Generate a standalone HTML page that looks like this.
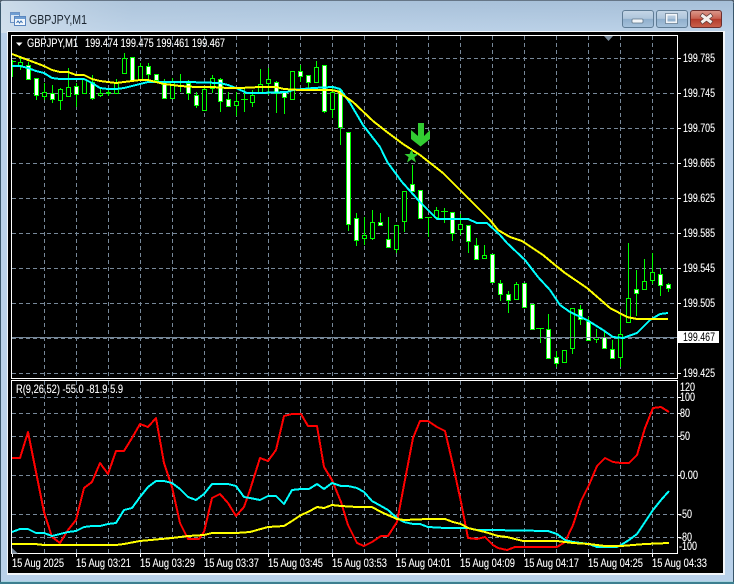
<!DOCTYPE html>
<html><head><meta charset="utf-8"><style>
html,body{margin:0;padding:0;width:734px;height:584px;overflow:hidden;background:#b9d1ea}
svg{display:block}
text{font-family:"Liberation Sans",sans-serif;font-size:12px;fill:#fff;stroke:#fff;stroke-width:.12px}
polyline{shape-rendering:crispEdges}
</style></head><body>
<svg width="734" height="584" viewBox="0 0 734 584" xmlns="http://www.w3.org/2000/svg">
<defs>
<linearGradient id="tb" x1="0" y1="0" x2="0" y2="1"><stop offset="0" stop-color="#a6bfd8"/><stop offset="1" stop-color="#bcd2e8"/></linearGradient>
<linearGradient id="tl" x1="0" y1="0" x2="1" y2="0"><stop offset="0" stop-color="#d9e5ef" stop-opacity=".75"/><stop offset=".18" stop-color="#c3d5e6" stop-opacity=".25"/><stop offset="1" stop-color="#b8d0e8" stop-opacity="0"/></linearGradient>
<linearGradient id="bt" x1="0" y1="0" x2="0" y2="1"><stop offset="0" stop-color="#c6d7e7"/><stop offset=".48" stop-color="#aec5db"/><stop offset=".5" stop-color="#8fafcc"/><stop offset="1" stop-color="#a7c2dc"/></linearGradient>
<linearGradient id="cl" x1="0" y1="0" x2="0" y2="1"><stop offset="0" stop-color="#dc9a8e"/><stop offset=".48" stop-color="#c8604f"/><stop offset=".5" stop-color="#b43a2a"/><stop offset="1" stop-color="#c9614c"/></linearGradient>
</defs>
<rect x="0" y="0" width="734" height="584" fill="#b9d1ea"/>
<rect x="1" y="1" width="732" height="32" fill="url(#tb)"/>
<rect x="1" y="1" width="732" height="32" fill="url(#tl)"/>
<path d="M0 5V3Q0 0 3 0H731Q734 0 734 3V5" fill="none" stroke="#4a5866" stroke-width="1.4"/>
<path d="M.5 3V584M733.5 3V584" stroke="#39566b" stroke-width="1"/>
<rect x="0" y="582" width="734" height="2" fill="#3d7f90"/>
<rect x="1" y="581" width="732" height="1" fill="#a7d3de"/>
<!-- title icon -->
<g shape-rendering="crispEdges">
<rect x="10.500" y="12.500" width="9" height="10" fill="#dbe7f4" stroke="#6d93c4"/>
<rect x="14.500" y="16.500" width="11" height="9" fill="#f2f7fc" stroke="#5a86bf"/>
<rect x="11" y="13" width="8" height="2" fill="#6f9ed2"/>
<rect x="15" y="17" width="10" height="2" fill="#6f9ed2"/>
</g>
<path d="M16.500 23l1.500-2 1.500 2 1.500-2 1.500 2" fill="none" stroke="#3b73b3"/>
<text x="29" y="24" textLength="58" lengthAdjust="spacingAndGlyphs" style="font-size:13px;fill:#1b2530;stroke:none">GBPJPY,M1</text>
<!-- buttons -->
<rect x="622.500" y="10.500" width="31" height="17" rx="2.500" fill="url(#bt)" stroke="#5f7c95"/>
<rect x="632" y="19" width="11" height="4" rx="1" fill="#f3f6f9" stroke="#5f7588" stroke-width=".8"/>
<rect x="656.500" y="10.500" width="31" height="17" rx="2.500" fill="url(#bt)" stroke="#5f7c95"/>
<rect x="666.500" y="14.500" width="10" height="8" fill="none" stroke="#f3f6f9" stroke-width="2"/>
<rect x="665.500" y="13.500" width="12" height="10" fill="none" stroke="#5f7588" stroke-width=".7"/>
<rect x="690.500" y="10.500" width="31" height="17" rx="2.500" fill="url(#cl)" stroke="#6b2f2e"/>
<path d="M701 14.500L712 23M712 14.500L701 23" stroke="#5d3a36" stroke-width="4.400"/>
<path d="M701.500 15L711.500 22.500M711.500 15L701.500 22.500" stroke="#f5efec" stroke-width="3"/>
<!-- client -->
<rect x="7" y="31" width="718" height="544" fill="#f2f6fa"/>
<rect x="8" y="32" width="715" height="541" fill="#000"/>
<!-- grid -->
<g shape-rendering="crispEdges" fill="none" stroke="#778899" stroke-width="1" stroke-dasharray="4 3">
<path d="M12 58.500H677M12 93.500H677M12 128.500H677M12 163.500H677M12 198.500H677M12 233.500H677M12 268.500H677M12 303.500H677M12 338.500H677M12 373.500H677"/>
<path d="M44.500 36V378M76.500 36V378M108.500 36V378M140.500 36V378M172.500 36V378M204.500 36V378M236.500 36V378M268.500 36V378M300.500 36V378M332.500 36V378M364.500 36V378M396.500 36V378M428.500 36V378M460.500 36V378M492.500 36V378M524.500 36V378M556.500 36V378M588.500 36V378M620.500 36V378M652.500 36V378"/>
<path d="M12 397.500H677M12 413.500H677M12 436.500H677M12 475.500H677M12 514.500H677M12 537.500H677"/>
<path d="M44.500 381V553M76.500 381V553M108.500 381V553M140.500 381V553M172.500 381V553M204.500 381V553M236.500 381V553M268.500 381V553M300.500 381V553M332.500 381V553M364.500 381V553M396.500 381V553M428.500 381V553M460.500 381V553M492.500 381V553M524.500 381V553M556.500 381V553M588.500 381V553M620.500 381V553M652.500 381V553"/>
</g>
<!-- candles wicks -->
<path shape-rendering="crispEdges" fill="none" stroke="#00ff00" stroke-width="1" d="M12.500 60V77M12 61.500H16M20.500 58V70M28.500 62V80M36.500 78V100M44.500 83V100M52.500 85V103M60.500 88V110M68.500 68V96M76.500 83V107M84.500 79V93M92.500 75V100M100.500 88V97M108.500 88V96M116.500 79V94M124.500 53V73M132.500 57V80M140.500 63V79M148.500 63V80M156.500 74V80M164.500 79V99M172.500 78V98M180.500 74V92M188.500 80V100M196.500 92V108M204.500 88V111M212.500 75V93M220.500 78V112M228.500 92V107M236.500 92V116M244.500 89V112M241 99.500H248M252.500 90V107M260.500 69V92M268.500 68V95M276.500 81V113M284.500 91V114M292.500 71V99M300.500 65V82M308.500 75V90M316.500 61V83M324.500 65V113M332.500 87V118M340.500 90V145M348.500 132V231M356.500 213V246M364.500 217V245M372.500 210V240M380.500 213V225M388.500 217V247M396.500 225V253M404.500 191V232M412.500 165V191M420.500 190V218M428.500 217V237M425 217.500H432M436.500 207V217M444.500 208V223M441 211.500H448M452.500 212V241M460.500 214V235M468.500 225V253M476.500 238V259M484.500 245V258M492.500 254V282M500.500 280V301M508.500 291V313M516.500 282V299M524.500 283V307M532.500 304V329M540.500 328V343M536 328.500H544M548.500 314V359M556.500 351V367M564.500 350V363M572.500 308V354M580.500 305V325M588.500 317V340M596.500 329V343M604.500 332V349M612.500 340V359M620.500 315V367M628.500 243V323M636.500 270V316M644.500 259V289M652.500 253V284M660.500 268V296M668.500 283V292"/>
<!-- hollow bodies -->
<path shape-rendering="crispEdges" fill="#000" stroke="#00ff00" stroke-width="1" d="M18.500 62.500h4v3h-4zM42.500 92.500h4v4h-4zM58.500 89.500h4v11h-4zM66.500 87.500h4v9h-4zM82.500 79.500h4v14h-4zM98.500 93.500h4v2h-4zM106.500 92.500h4v1h-4zM114.500 83.500h4v10h-4zM122.500 58.500h4v15h-4zM138.500 66.500h4v13h-4zM170.500 81.500h4v17h-4zM202.500 89.500h4v21h-4zM210.500 78.500h4v10h-4zM234.500 101.500h4v4h-4zM250.500 95.500h4v7h-4zM258.500 84.500h4v8h-4zM266.500 79.500h4v4h-4zM290.500 71.500h4v28h-4zM314.500 67.500h4v15h-4zM330.500 92.500h4v17h-4zM362.500 235.500h4v3h-4zM370.500 222.500h4v16h-4zM394.500 225.500h4v24h-4zM402.500 191.500h4v30h-4zM434.500 210.500h4v7h-4zM458.500 224.500h4v5h-4zM482.500 255.500h4v3h-4zM514.500 284.500h4v15h-4zM562.500 350.500h4v12h-4zM570.500 308.500h4v40h-4zM594.500 337.500h4v2h-4zM618.500 334.500h4v23h-4zM626.500 298.500h4v24h-4zM642.500 281.500h4v8h-4zM650.500 272.500h4v8h-4z"/>
<!-- white bodies -->
<path shape-rendering="crispEdges" fill="#fff" stroke="#00ff00" stroke-width="1" d="M26.500 65.500h4v14h-4zM34.500 78.500h4v17h-4zM50.500 93.500h4v6h-4zM74.500 86.500h4v8h-4zM90.500 82.500h4v16h-4zM130.500 57.500h4v23h-4zM146.500 66.500h4v8h-4zM154.500 74.500h4v6h-4zM162.500 81.500h4v17h-4zM186.500 83.500h4v10h-4zM194.500 95.500h4v10h-4zM218.500 79.500h4v22h-4zM226.500 99.500h4v7h-4zM274.500 82.500h4v11h-4zM282.500 91.500h4v6h-4zM298.500 71.500h4v5h-4zM306.500 75.500h4v7h-4zM322.500 65.500h4v46h-4zM338.500 90.500h4v37h-4zM346.500 132.500h4v92h-4zM354.500 218.500h4v22h-4zM378.500 222.500h4v3h-4zM386.500 239.500h4v8h-4zM410.500 184.500h4v7h-4zM418.500 190.500h4v28h-4zM450.500 212.500h4v21h-4zM466.500 225.500h4v16h-4zM474.500 245.500h4v14h-4zM490.500 254.500h4v28h-4zM498.500 283.500h4v11h-4zM506.500 294.500h4v6h-4zM522.500 283.500h4v24h-4zM530.500 304.500h4v25h-4zM546.500 329.500h4v29h-4zM554.500 357.500h4v6h-4zM578.500 309.500h4v10h-4zM586.500 321.500h4v19h-4zM602.500 337.500h4v11h-4zM610.500 349.500h4v9h-4zM634.500 289.500h4v4h-4zM658.500 274.500h4v11h-4zM666.500 284.500h4v4h-4z"/>
<!-- bid line -->
<rect x="12" y="337" width="666" height="1" fill="#778899"/>
<!-- MAs -->
<polyline fill="none" stroke="#00ffff" stroke-width="2" stroke-linejoin="round" points="12,66 20,66 28,68 36,71 44,73 52,78 60,79 84,79 92,83 100,88 108,89 116,89 124,88 132,86 140,84 148,82 188,82 220,83 228,85 236,88 247,93 260,93 287,92 293,90 313,88 333,87 340,89 350,103 363,125 380,147 388,163 402,182 420,202 437,219 468,219 477,223 487,223 500,235 507,243 525,260 538,277 550,290 560,305 570,312 587,320 603,330 613,337 623,338 637,333 650,320 660,314 668,313"/>
<polyline fill="none" stroke="#ffff00" stroke-width="2" stroke-linejoin="round" points="12,54 20,57 28,60 36,63 44,66 52,70 60,72 68,72 76,75 84,75 92,79 100,81 108,82 116,83 124,82 132,81 140,80 148,80 156,82 164,84 172,85 180,86 196,87 212,87 228,88 240,88 260,87 276,87 284,89 300,90 330,90 337,91 353,102 373,121 387,132 403,144 420,155 443,173 470,200 490,220 498,230 510,237 522,241 543,255 555,265 565,273 587,288 610,308 627,317 637,319 668,319"/>
<!-- arrow and star -->
<path fill="#32cd32" d="M411 130L418 136V123H424V136L430 130V139L420.500 146.500L411 139Z"/>
<path fill="#32cd32" d="M411.500 149L413.400 154H418.500L414.400 157.300L416 162.500L411.500 159.400L407 162.500L408.600 157.300L404.500 154H409.600Z"/>
<!-- top marker -->
<path fill="#778899" d="M604 36H613L608.500 41Z"/>
<!-- borders -->
<path shape-rendering="crispEdges" fill="none" stroke="#fff" stroke-width="1" d="M11.500 35.500H677.500V378.500H11.500ZM11.500 380.500H677.500V553.500H11.500Z"/>
<!-- header -->
<path fill="#fff" d="M16 42.500H22.500L19.200 46Z"/>
<text x="27" y="47" textLength="51" lengthAdjust="spacingAndGlyphs">GBPJPY,M1</text>
<text x="85" y="47" textLength="140" lengthAdjust="spacingAndGlyphs">199.474 199.475 199.461 199.467</text>
<text x="16" y="393" textLength="107" lengthAdjust="spacingAndGlyphs">R(9,26,52) -55.0 -81.9 5.9</text>
<!-- indicator lines -->
<polyline fill="none" stroke="#ff0000" stroke-width="2" stroke-linejoin="round" points="12,458 20,458 28,432 36,472 44,512 52,537 60,543 68,530 76,520 84,488 92,482 100,463 108,474 116,451 124,451 132,438 140,424 148,427 156,418 164,463 172,487 180,523 188,539 199,539 204,532 212,498 220,494 228,503 236,516 244,507 250,490 260,458 268,461 276,450 284,416 292,414 301,414 308,426 317,426 324,467 332,480 341,502 348,525 357,543 364,546 372,542 381,536 388,536 397,522 404,485 413,438 420,421 428,421 437,427 445,431 453,465 461,502 468,538 477,539 485,537 493,545 498,548 507,550 515,547 523,547 557,547 565,542 573,525 581,501 589,485 597,466 605,458 613,462 621,463 629,463 637,455 645,428 653,408 661,407 669,412"/>
<polyline fill="none" stroke="#00ffff" stroke-width="2" stroke-linejoin="round" points="12,532 20,529 28,529 36,533 44,533 52,536 60,534 68,532 76,531 84,527 92,526 100,526 108,524 116,523 124,510 132,508 140,497 148,487 156,481 164,481 172,483 180,489 188,497 196,500 204,494 212,484 228,484 236,486 244,497 250,498 260,500 268,496 276,496 284,504 292,490 301,489 309,489 317,484 324,489 332,483 341,486 348,486 357,488 364,492 372,501 381,506 388,510 397,518 404,522 413,524 420,524 428,527 445,528 468,528 477,530 490,530 548,531 557,534 565,540 573,542 581,543 589,544 597,547 617,547 621,545 629,540 637,534 645,522 653,510 661,500 669,491"/>
<polyline fill="none" stroke="#ffff00" stroke-width="2" stroke-linejoin="round" points="12,544 35,544 44,545 116,545 124,544 140,541 172,538 188,536 204,535 212,533 236,533 250,532 268,527 284,526 292,521 301,515 308,512 317,507 324,508 332,505 341,506 357,507 372,507 381,512 397,519 404,520 428,519 445,519 453,522 461,524 468,528 485,532 498,536 507,537 523,541 557,541 573,543 589,544 605,546 621,546 645,544 669,543"/>
<path fill="#778899" d="M12 548L18 553.500H12Z"/>
<!-- ticks -->
<path shape-rendering="crispEdges" fill="none" stroke="#fff" d="M678 58.500h3M678 93.500h3M678 128.500h3M678 163.500h3M678 198.500h3M678 233.500h3M678 268.500h3M678 303.500h3M678 373.500h3M678 397.500h3M678 413.500h3M678 436.500h3M678 475.500h3M678 514.500h3M678 537.500h3M12.500 554v3M76.500 554v3M140.500 554v3M204.500 554v3M268.500 554v3M332.500 554v3M396.500 554v3M460.500 554v3M524.500 554v3M588.500 554v3M652.500 554v3"/>
<!-- price labels -->
<g>
<text x="683" y="62" textLength="32" lengthAdjust="spacingAndGlyphs">199.785</text>
<text x="683" y="97" textLength="32" lengthAdjust="spacingAndGlyphs">199.745</text>
<text x="683" y="132" textLength="32" lengthAdjust="spacingAndGlyphs">199.705</text>
<text x="683" y="167" textLength="32" lengthAdjust="spacingAndGlyphs">199.665</text>
<text x="683" y="202" textLength="32" lengthAdjust="spacingAndGlyphs">199.625</text>
<text x="683" y="237" textLength="32" lengthAdjust="spacingAndGlyphs">199.585</text>
<text x="683" y="272" textLength="32" lengthAdjust="spacingAndGlyphs">199.545</text>
<text x="683" y="307" textLength="32" lengthAdjust="spacingAndGlyphs">199.505</text>
<text x="683" y="377" textLength="32" lengthAdjust="spacingAndGlyphs">199.425</text>
</g>
<rect x="678" y="331" width="41" height="12" fill="#fff"/>
<text x="683" y="341" textLength="32" lengthAdjust="spacingAndGlyphs" style="fill:#000;stroke:none">199.467</text>
<!-- indicator axis -->
<text x="680" y="391" textLength="15" lengthAdjust="spacingAndGlyphs">120</text>
<text x="680" y="401" textLength="15" lengthAdjust="spacingAndGlyphs">100</text>
<text x="680" y="417" textLength="10" lengthAdjust="spacingAndGlyphs">80</text>
<text x="680" y="440" textLength="10" lengthAdjust="spacingAndGlyphs">50</text>
<text x="680" y="479" textLength="18" lengthAdjust="spacingAndGlyphs">0.00</text>
<text x="679" y="518" textLength="13" lengthAdjust="spacingAndGlyphs">-50</text>
<text x="679" y="541" textLength="13" lengthAdjust="spacingAndGlyphs">-80</text>
<text x="679" y="550" textLength="18" lengthAdjust="spacingAndGlyphs">-100</text>
<!-- time labels -->
<text x="12" y="567" textLength="52" lengthAdjust="spacingAndGlyphs">15 Aug 2025</text>
<text x="76" y="567" textLength="55" lengthAdjust="spacingAndGlyphs">15 Aug 03:21</text>
<text x="140" y="567" textLength="55" lengthAdjust="spacingAndGlyphs">15 Aug 03:29</text>
<text x="204" y="567" textLength="55" lengthAdjust="spacingAndGlyphs">15 Aug 03:37</text>
<text x="268" y="567" textLength="55" lengthAdjust="spacingAndGlyphs">15 Aug 03:45</text>
<text x="332" y="567" textLength="55" lengthAdjust="spacingAndGlyphs">15 Aug 03:53</text>
<text x="396" y="567" textLength="55" lengthAdjust="spacingAndGlyphs">15 Aug 04:01</text>
<text x="460" y="567" textLength="55" lengthAdjust="spacingAndGlyphs">15 Aug 04:09</text>
<text x="524" y="567" textLength="55" lengthAdjust="spacingAndGlyphs">15 Aug 04:17</text>
<text x="588" y="567" textLength="55" lengthAdjust="spacingAndGlyphs">15 Aug 04:25</text>
<text x="652" y="567" textLength="55" lengthAdjust="spacingAndGlyphs">15 Aug 04:33</text>
</svg>
</body></html>
